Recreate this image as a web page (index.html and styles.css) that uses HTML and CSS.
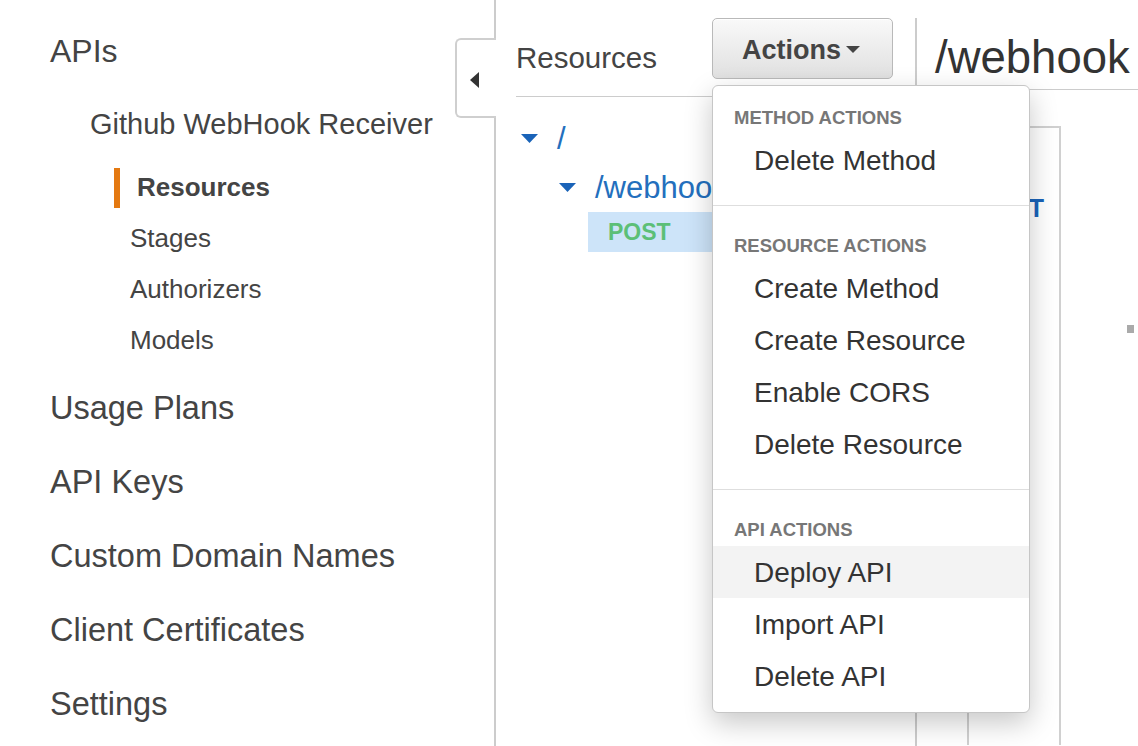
FILE: index.html
```html
<!DOCTYPE html>
<html lang="en">
<head>
<meta charset="utf-8">
<title>API Gateway - Resources</title>
<link rel="stylesheet" href="styles.css">
</head>
<body>
<div class="app">
  <nav class="sidebar">
    <a class="nav-top">APIs</a>
    <a class="nav-api">Github WebHook Receiver</a>
    <ul class="nav-sub">
      <li class="active">Resources</li>
      <li>Stages</li>
      <li>Authorizers</li>
      <li>Models</li>
    </ul>
    <ul class="nav-main">
      <li>Usage Plans</li>
      <li>API Keys</li>
      <li>Custom Domain Names</li>
      <li>Client Certificates</li>
      <li>Settings</li>
    </ul>
    <button class="collapse" aria-label="Collapse">
      <svg width="9" height="16" viewBox="0 0 9 16"><polygon points="9,0 9,16 0,8" fill="#333"/></svg>
    </button>
  </nav>

  <section class="resources">
    <header class="res-header">
      <h2 class="res-title">Resources</h2>
      <div class="actions">
        <button class="actions-btn">Actions<span class="caret"></span></button>
        <div class="menu">
          <div class="menu-section first">
            <div class="menu-header">Method Actions</div>
            <div class="menu-item">Delete Method</div>
          </div>
          <div class="menu-section">
            <div class="menu-header">Resource Actions</div>
            <div class="menu-item">Create Method</div>
            <div class="menu-item">Create Resource</div>
            <div class="menu-item">Enable CORS</div>
            <div class="menu-item">Delete Resource</div>
          </div>
          <div class="menu-section last">
            <div class="menu-header">API Actions</div>
            <div class="menu-item hover">Deploy API</div>
            <div class="menu-item">Import API</div>
            <div class="menu-item">Delete API</div>
          </div>
        </div>
      </div>
    </header>
    <ul class="tree">
      <li class="tree-row root">
        <svg class="tri" width="17" height="9" viewBox="0 0 17 9"><polygon points="0,0 17,0 8.5,9" fill="#1a63b8"/></svg>
        <span class="tree-path">/</span>
      </li>
      <li class="tree-row child">
        <svg class="tri" width="17" height="9" viewBox="0 0 17 9"><polygon points="0,0 17,0 8.5,9" fill="#1a63b8"/></svg>
        <span class="tree-path">/webhook</span>
      </li>
      <li class="tree-method">POST</li>
    </ul>
  </section>

  <section class="detail">
    <header class="detail-header">
      <h1 class="detail-title">/webhook</h1>
    </header>
    <div class="detail-body">
      <div class="exec-box">
        <span class="exec-method">POST</span>
      </div>
      <span class="dot"></span>
    </div>
  </section>
</div>
</body>
</html>
```

FILE: styles.css
```css
* { box-sizing: border-box; }

html, body {
  margin: 0;
  padding: 0;
  height: 100%;
  background: #fff;
  overflow: hidden;
}

body {
  font-family: "Liberation Sans", Arial, Helvetica, sans-serif;
  color: #444;
}

ul { list-style: none; margin: 0; padding: 0; }
h1, h2 { margin: 0; font-weight: normal; }

.app {
  display: flex;
  height: 746px;
  overflow: hidden;
}

/* ---------- Sidebar ---------- */
.sidebar {
  position: relative;
  flex: 0 0 496px;
  width: 496px;
  border-right: 2px solid #cccccc;
  padding-top: 31px;
}

.nav-top {
  display: block;
  padding-left: 50px;
  font-size: 32px;
  line-height: 40px;
  color: #444;
}

.nav-api {
  display: block;
  margin-top: 27px;
  padding-left: 90px;
  font-size: 29px;
  line-height: 52px;
  height: 52px;
  color: #444;
}

.nav-sub {
  margin-top: 12px;
}

.nav-sub li {
  padding-left: 130px;
  font-size: 26px;
  line-height: 51px;
  height: 51px;
  color: #444;
}

.nav-sub li.active {
  display: flex;
  align-items: center;
  padding-left: 114px;
  font-weight: bold;
}

.nav-sub li.active::before {
  content: "";
  display: block;
  width: 6px;
  height: 40px;
  background: #e47911;
  margin-right: 17px;
}

.nav-main {
  margin-top: 5px;
}

.nav-main li {
  padding-left: 50px;
  font-size: 32.5px;
  line-height: 74px;
  height: 74px;
  color: #444;
}

.collapse {
  position: absolute;
  left: 455px;
  top: 38px;
  width: 41px;
  height: 80px;
  padding: 0 0 0 13px;
  background: #fff;
  border: 2px solid #cfcfcf;
  border-right: none;
  border-radius: 6px 0 0 6px;
  display: flex;
  align-items: center;
}

.collapse svg { display: block; margin-top: 3px; }

/* ---------- Resources column ---------- */
.resources {
  flex: 0 0 419px;
  width: 419px;
  padding: 0 22px 0 20px;
}

.res-header {
  display: flex;
  align-items: flex-start;
  padding-top: 18px;
  padding-bottom: 17px;
  border-bottom: 1px solid #cccccc;
}

.res-title {
  margin-top: 9px;
  font-size: 29.5px;
  line-height: 61px;
  height: 52px;
  color: #444;
}

.actions {
  position: relative;
  margin-left: auto;
}

.actions-btn {
  display: flex;
  align-items: center;
  width: 181px;
  height: 61px;
  padding: 4px 0 0 29px;
  font-family: "Liberation Sans", Arial, Helvetica, sans-serif;
  font-size: 27px;
  font-weight: bold;
  color: #444;
  background: linear-gradient(#f9f9f9, #e0e0e0);
  border: 1px solid #b9b9b9;
  border-radius: 5px;
  box-shadow: inset 0 1px 0 #ffffff;
}

.caret {
  display: block;
  width: 0;
  height: 0;
  margin-left: 5px;
  margin-top: -2px;
  border-top: 7px solid #444;
  border-left: 7px solid transparent;
  border-right: 7px solid transparent;
}

/* dropdown menu */
.menu {
  position: absolute;
  top: 67px;
  left: 0;
  width: 318px;
  background: #fff;
  border: 1px solid #c6c6c6;
  border-radius: 6px;
  box-shadow: 0 10px 28px rgba(0, 0, 0, 0.22);
  z-index: 10;
}

.menu-section {
  padding-bottom: 19px;
  border-bottom: 1px solid #dedede;
}

.menu-section.last {
  padding-bottom: 10px;
  border-bottom: none;
}

.menu-header {
  padding: 30px 0 0 21px;
  margin-bottom: 6px;
  font-size: 18.5px;
  line-height: 20px;
  font-weight: bold;
  text-transform: uppercase;
  color: #777;
}

.menu-section.first .menu-header { padding-top: 22px; }

.menu-item {
  height: 52px;
  line-height: 54px;
  padding-left: 41px;
  font-size: 28px;
  color: #333;
}

.menu-item.hover { background: #f3f3f3; }

/* tree */
.tree {
  margin-top: 17px;
}

.tree-row {
  display: flex;
  align-items: center;
  height: 49px;
  line-height: 49px;
  font-size: 31px;
  color: #236fbd;
  white-space: nowrap;
}

.tree-row .tri { flex: none; margin-right: 19px; }
.tree-row.root { padding-left: 5px; }
.tree-row.child { padding-left: 43px; }

.tree-method {
  margin-left: 72px;
  height: 40px;
  line-height: 40px;
  padding-left: 20px;
  font-size: 23px;
  font-weight: bold;
  color: #5cbf77;
  background: #cde4f9;
}

/* ---------- Detail column ---------- */
.detail {
  flex: 1;
  margin-top: 18px;
  border-left: 2px solid #cccccc;
}

.detail-header {
  height: 72px;
  padding: 15px 0 0 18px;
  border-bottom: 1px solid #cccccc;
}

.detail-title {
  font-size: 45.5px;
  line-height: 50px;
  color: #333;
  white-space: nowrap;
}

.detail-body {
  display: flex;
  align-items: flex-start;
  padding: 36px 0 0 50px;
}

.exec-box {
  width: 94px;
  height: 619px;
  border: 2px solid #d0d0d0;
  border-bottom: none;
  padding: 66px 15px 0 0;
  text-align: right;
}

.exec-method {
  font-size: 25px;
  font-weight: bold;
  color: #1a63b8;
}

.dot {
  display: block;
  width: 7px;
  height: 8px;
  margin: 199px 0 0 66px;
  background: #aaaaaa;
}
```
